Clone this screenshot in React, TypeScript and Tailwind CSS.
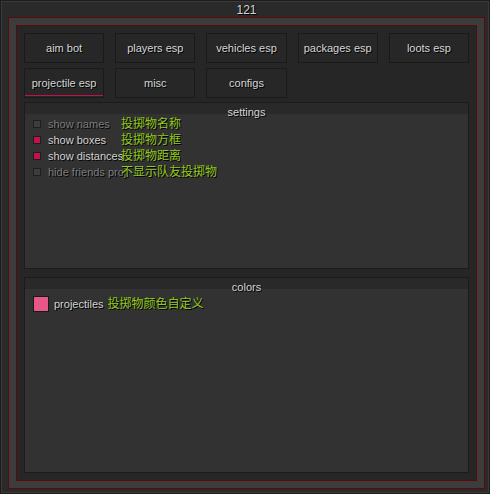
const tabs = [
  'aim bot',
  'players esp',
  'vehicles esp',
  'packages esp',
  'loots esp',
  'projectile esp',
  'misc',
  'configs',
];

const options = [
  { label: 'show names', note: '投掷物名称', on: false },
  { label: 'show boxes', note: '投掷物方框', on: true },
  { label: 'show distances', note: '投掷物距离', on: true },
  { label: 'hide friends proj', note: '不显示队友投掷物', on: false },
];

const shadow = '[text-shadow:1px_1px_0_#000]';

function Panel({ title, className, children }: { title: string; className: string; children: React.ReactNode }) {
  return (
    <div className={`flex flex-col border border-[#1b1b1b] ${className}`}>
      <div className="relative z-10 h-[11px] bg-[#292929] flex justify-center">
        <span className={`block leading-[18px] text-[11px] text-[#d6d6d6] ${shadow}`}>{title}</span>
      </div>
      <div className="flex-1 bg-[#323232]">{children}</div>
    </div>
  );
}

export default function App() {
  return (
    <div
      className="w-[490px] h-[494px] bg-[#1c1c1c] p-px"
      style={{ fontFamily: '"Liberation Sans", "Noto Sans CJK SC", sans-serif' }}
    >
      <div className="h-full border border-[#3a3a3a] bg-[#2a2a2a] flex flex-col pl-[6px] pr-[3px] pb-[3px]">
        <div className={`h-[15px] flex items-center justify-center text-[12px] text-[#d4d4d4] ${shadow}`}>121</div>
        <div className="flex-1 border border-[#5a0a0a] bg-[#3c3c3c] p-[7px]">
          <div className="h-full border border-[#5a0a0a] bg-[#262626] p-[7px] flex flex-col">
            <div className="grid grid-cols-5 gap-x-[11px] gap-y-[5px]">
              {tabs.map(t => (
                <button
                  key={t}
                  className={`relative h-[30px] border border-[#1a1a1a] bg-[#272727] text-[11px] text-[#d6d6d6] ${shadow}`}
                >
                  {t}
                  {t === 'projectile esp' && (
                    <span className="absolute left-0 right-0 bottom-[1px] h-px bg-[#c4104c]" />
                  )}
                </button>
              ))}
            </div>

            <Panel title="settings" className="mt-[4px] h-[167px]">
              <div className="pt-[2px] pl-[8px]">
                {options.map(o => (
                  <div key={o.label} className="h-4 flex items-center">
                    <span
                      className={`w-[8px] h-[8px] border border-[#1e1e1e] ${o.on ? 'bg-[#c4104c]' : 'bg-[#3d3d3d]'}`}
                    />
                    <span
                      className={`ml-[7px] w-[73px] whitespace-nowrap text-[11px] ${shadow} ${o.on ? 'text-[#d2d2d2]' : 'text-[#7c7c7c]'}`}
                    >
                      {o.label}
                    </span>
                    <span className={`relative text-[12px] text-[#92c81c] ${shadow}`}>{o.note}</span>
                  </div>
                ))}
              </div>
            </Panel>

            <Panel title="colors" className="mt-[8px] flex-1">
              <div className="pt-[6px] pl-[8px] flex items-center">
                <span className="w-[16px] h-[16px] border border-[#1a1a1a] bg-[#e8578a]" />
                <span className={`ml-[5px] text-[11px] text-[#d2d2d2] ${shadow}`}>projectiles</span>
                <span className={`ml-[4px] text-[12px] text-[#92c81c] ${shadow}`}>投掷物颜色自定义</span>
              </div>
            </Panel>
          </div>
        </div>
      </div>
    </div>
  );
}
